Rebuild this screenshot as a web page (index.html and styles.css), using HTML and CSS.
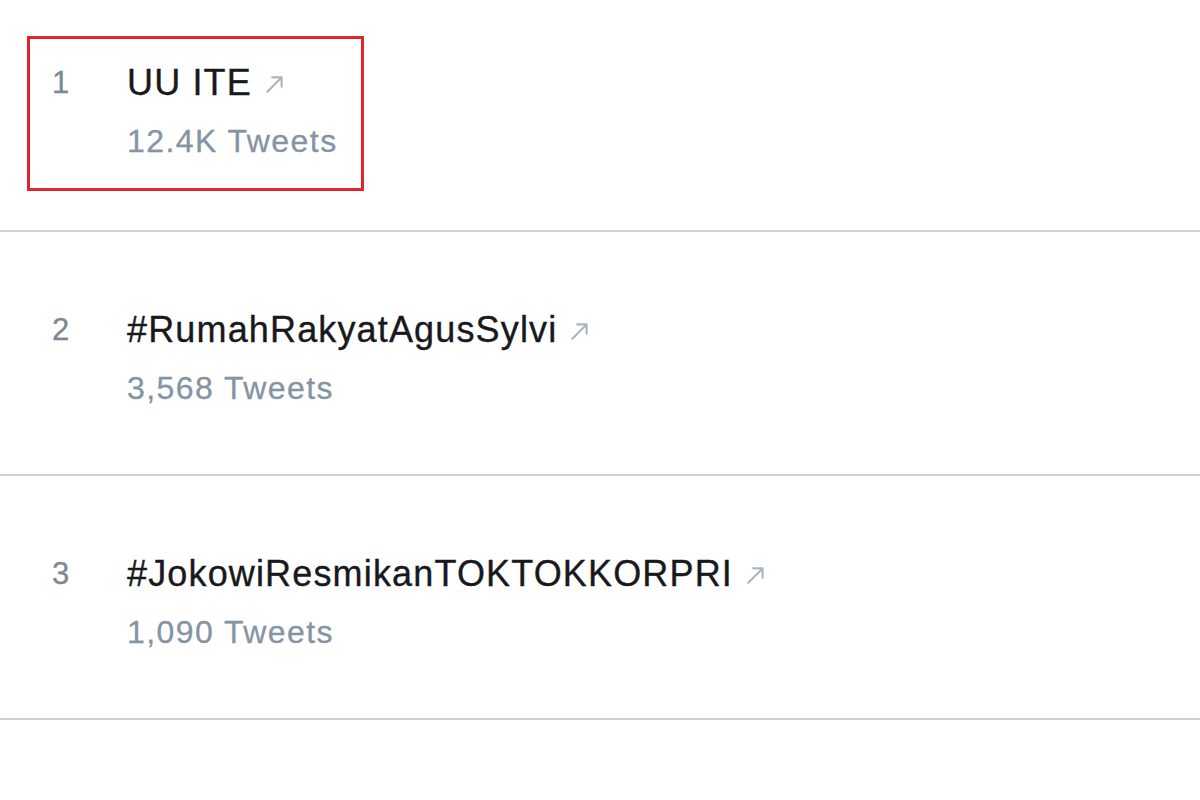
FILE: index.html
```html
<!DOCTYPE html>
<html lang="id">
<head>
<meta charset="utf-8">
<title>Trends</title>
<link rel="stylesheet" href="styles.css">
</head>
<body>
<div class="page">
  <ul class="trends">
    <li class="trend first">
      <span class="rank">1</span>
      <div class="body">
        <div class="title">UU ITE<svg class="arrow" viewBox="0 0 20 20"><path d="M3 17 L16 4 M7.5 4 H16 V12.5"/></svg></div>
        <div class="count">12.4K Tweets</div>
      </div>
      <div class="highlight"></div>
    </li>
    <li class="trend">
      <span class="rank">2</span>
      <div class="body">
        <div class="title">#RumahRakyatAgusSylvi<svg class="arrow" viewBox="0 0 20 20"><path d="M3 17 L16 4 M7.5 4 H16 V12.5"/></svg></div>
        <div class="count">3,568 Tweets</div>
      </div>
    </li>
    <li class="trend">
      <span class="rank">3</span>
      <div class="body">
        <div class="title">#JokowiResmikanTOKTOKKORPRI<svg class="arrow" viewBox="0 0 20 20"><path d="M3 17 L16 4 M7.5 4 H16 V12.5"/></svg></div>
        <div class="count">1,090 Tweets</div>
      </div>
    </li>
    <li class="trend">
      <span class="rank">4</span>
      <div class="body">
        <div class="title">#AhokDjarotLagi<svg class="arrow" viewBox="0 0 20 20"><path d="M3 17 L16 4 M7.5 4 H16 V12.5"/></svg></div>
        <div class="count">1,020 Tweets</div>
      </div>
    </li>
  </ul>
</div>
</body>
</html>
```
FILE: styles.css
```css
html, body {
  margin: 0;
  padding: 0;
  background: #ffffff;
  overflow: hidden;
}
body {
  font-family: "Liberation Sans", Arial, sans-serif;
  width: 1200px;
  height: 800px;
}
.page {
  width: 1200px;
  height: 800px;
  overflow: hidden;
}
.trends {
  list-style: none;
  margin: 0;
  padding: 0;
}
.trend {
  position: relative;
  display: flex;
  align-items: flex-start;
  padding: 76px 0 66px 52px;
  border-bottom: 2px solid #c9d2d9;
}
.trend.first {
  padding-top: 61px;
  padding-bottom: 69px;
}
.rank {
  width: 75px;
  flex: none;
  font-size: 31px;
  line-height: 44px;
  color: #7b8895;
  letter-spacing: 0.03em;
  -webkit-text-stroke: 0.3px #7b8895;
}
.body {
  display: flex;
  flex-direction: column;
}
.title {
  display: flex;
  align-items: center;
  font-size: 36px;
  line-height: 44px;
  color: #17191c;
  letter-spacing: 0.032em;
  white-space: nowrap;
  -webkit-text-stroke: 0.35px #17191c;
}
.arrow {
  width: 22px;
  height: 22px;
  margin-left: 12px;
  margin-top: 2px;
  fill: none;
  stroke: #a9b5bf;
  stroke-width: 1.9;
  stroke-linecap: round;
  stroke-linejoin: round;
}
.count {
  margin-top: 16px;
  font-size: 32px;
  line-height: 40px;
  color: #8594a2;
  letter-spacing: 0.045em;
  -webkit-text-stroke: 0.3px #8594a2;
}
.highlight {
  position: absolute;
  left: 27px;
  top: 36px;
  width: 331px;
  height: 149px;
  border: 3px solid #e0262d;
}
```
